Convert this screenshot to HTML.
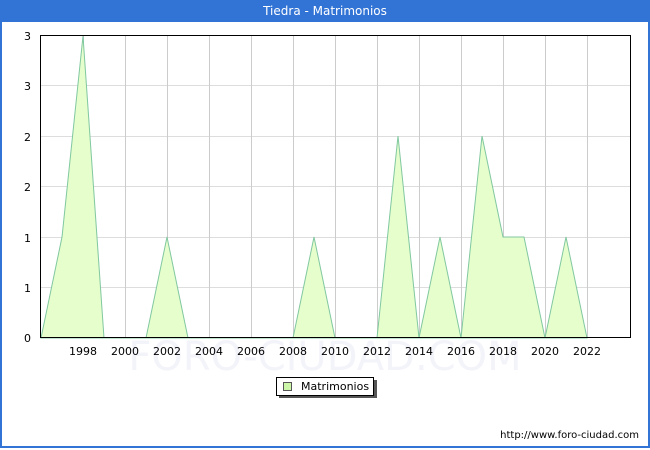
<html><body style="margin:0;width:650px;height:450px;overflow:hidden;font-family:'DejaVu Sans',sans-serif;background:#fff">
<div style="position:absolute;left:0;top:0;width:646px;height:446px;border:2px solid #3274d6;border-top:none"></div>
<div style="position:absolute;left:0;top:0;width:650px;height:22px;background:#3274d6;color:#fff;font-size:12px;text-align:center;line-height:23px">Tiedra - Matrimonios</div>
<svg width="650" height="450" style="position:absolute;left:0;top:0" font-family="DejaVu Sans, sans-serif" font-size="11">
<text x="325" y="370" font-size="40" fill="#f3f3fa" text-anchor="middle">FORO-CIUDAD.COM</text>
<g stroke="#ddd" stroke-width="1">
<line x1="41" y1="85.5" x2="630" y2="85.5"/><line x1="41" y1="136.5" x2="630" y2="136.5"/><line x1="41" y1="186.5" x2="630" y2="186.5"/><line x1="41" y1="237.5" x2="630" y2="237.5"/><line x1="41" y1="287.5" x2="630" y2="287.5"/>
</g>
<g stroke="#ccc" stroke-width="1">
<line x1="83.5" y1="36" x2="83.5" y2="338"/><line x1="125.5" y1="36" x2="125.5" y2="338"/><line x1="167.5" y1="36" x2="167.5" y2="338"/><line x1="209.5" y1="36" x2="209.5" y2="338"/><line x1="251.5" y1="36" x2="251.5" y2="338"/><line x1="293.5" y1="36" x2="293.5" y2="338"/><line x1="335.5" y1="36" x2="335.5" y2="338"/><line x1="377.5" y1="36" x2="377.5" y2="338"/><line x1="419.5" y1="36" x2="419.5" y2="338"/><line x1="461.5" y1="36" x2="461.5" y2="338"/><line x1="503.5" y1="36" x2="503.5" y2="338"/><line x1="545.5" y1="36" x2="545.5" y2="338"/><line x1="587.5" y1="36" x2="587.5" y2="338"/>
</g>
<polygon fill="#e6fdcc" stroke="#80c8a0" stroke-width="1" points="41,338 62,237 83,36 104,338 146,338 167,237 188,338 293,338 314,237 335,338 377,338 398,136 419,338 440,237 461,338 482,136 503,237 524,237 545,338 566,237 587,338"/>
<rect x="40.5" y="35.5" width="590" height="302" fill="none" stroke="#000"/>
<g text-anchor="end"><text x="31" y="40">3</text><text x="31" y="90">3</text><text x="31" y="141">2</text><text x="31" y="191">2</text><text x="31" y="242">1</text><text x="31" y="292">1</text><text x="31" y="342">0</text></g>
<g text-anchor="middle"><text x="83" y="355">1998</text><text x="125" y="355">2000</text><text x="167" y="355">2002</text><text x="209" y="355">2004</text><text x="251" y="355">2006</text><text x="293" y="355">2008</text><text x="335" y="355">2010</text><text x="377" y="355">2012</text><text x="419" y="355">2014</text><text x="461" y="355">2016</text><text x="503" y="355">2018</text><text x="545" y="355">2020</text><text x="587" y="355">2022</text></g>
<rect x="279" y="380" width="98" height="18" fill="#555"/>
<rect x="276.5" y="377.5" width="97" height="18" fill="#fff" stroke="#000"/>
<rect x="283.5" y="382.5" width="8" height="8" fill="#cdf7a8" stroke="#555"/>
<text x="301" y="390">Matrimonios</text>
<text x="639" y="438" font-size="10" text-anchor="end">http://www.foro-ciudad.com</text>
</svg>
</body></html>
